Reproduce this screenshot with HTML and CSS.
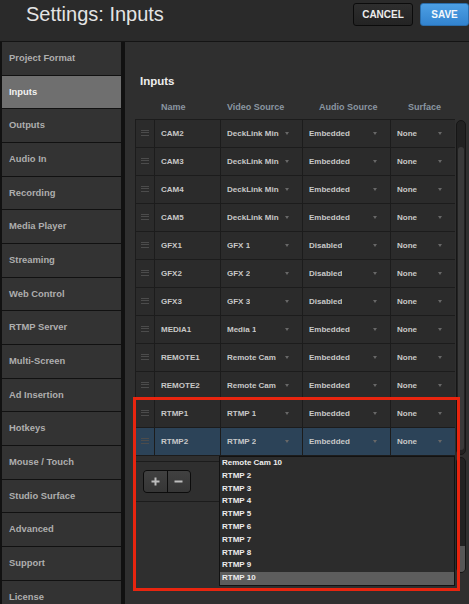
FILE: index.html
```html
<!DOCTYPE html>
<html>
<head>
<meta charset="utf-8">
<link rel="stylesheet" href="styles.css">
</head>
<body>
<div class="app">
  <header class="topbar">
    <h1 class="title">Settings: Inputs</h1>
    <div class="actions">
      <button class="btn btn-cancel">CANCEL</button>
      <button class="btn btn-save">SAVE</button>
    </div>
  </header>
  <div class="main">
    <nav class="sidebar">
      <div class="nav-item">Project Format</div>
      <div class="nav-item active">Inputs</div>
      <div class="nav-item">Outputs</div>
      <div class="nav-item">Audio In</div>
      <div class="nav-item">Recording</div>
      <div class="nav-item">Media Player</div>
      <div class="nav-item">Streaming</div>
      <div class="nav-item">Web Control</div>
      <div class="nav-item">RTMP Server</div>
      <div class="nav-item">Multi-Screen</div>
      <div class="nav-item">Ad Insertion</div>
      <div class="nav-item">Hotkeys</div>
      <div class="nav-item">Mouse / Touch</div>
      <div class="nav-item">Studio Surface</div>
      <div class="nav-item">Advanced</div>
      <div class="nav-item">Support</div>
      <div class="nav-item">License</div>
    </nav>
    <section class="content">
      <h2 class="section-title">Inputs</h2>
      <div class="table-wrap">
        <div class="table">
          <div class="thead">
            <div class="th"></div>
            <div class="th th-name">Name</div>
            <div class="th th-video">Video Source</div>
            <div class="th th-audio">Audio Source</div>
            <div class="th th-surface">Surface</div>
          </div>
          <div class="rows">
            <div class="row"><div class="cell handle"><span class="grip"></span></div><div class="cell name">CAM2</div><div class="cell sel"><span class="val">DeckLink Min</span><span class="caret"></span></div><div class="cell sel"><span class="val">Embedded</span><span class="caret"></span></div><div class="cell sel"><span class="val">None</span><span class="caret"></span></div></div>
            <div class="row"><div class="cell handle"><span class="grip"></span></div><div class="cell name">CAM3</div><div class="cell sel"><span class="val">DeckLink Min</span><span class="caret"></span></div><div class="cell sel"><span class="val">Embedded</span><span class="caret"></span></div><div class="cell sel"><span class="val">None</span><span class="caret"></span></div></div>
            <div class="row"><div class="cell handle"><span class="grip"></span></div><div class="cell name">CAM4</div><div class="cell sel"><span class="val">DeckLink Min</span><span class="caret"></span></div><div class="cell sel"><span class="val">Embedded</span><span class="caret"></span></div><div class="cell sel"><span class="val">None</span><span class="caret"></span></div></div>
            <div class="row"><div class="cell handle"><span class="grip"></span></div><div class="cell name">CAM5</div><div class="cell sel"><span class="val">DeckLink Min</span><span class="caret"></span></div><div class="cell sel"><span class="val">Embedded</span><span class="caret"></span></div><div class="cell sel"><span class="val">None</span><span class="caret"></span></div></div>
            <div class="row"><div class="cell handle"><span class="grip"></span></div><div class="cell name">GFX1</div><div class="cell sel"><span class="val">GFX 1</span><span class="caret"></span></div><div class="cell sel"><span class="val">Disabled</span><span class="caret"></span></div><div class="cell sel"><span class="val">None</span><span class="caret"></span></div></div>
            <div class="row"><div class="cell handle"><span class="grip"></span></div><div class="cell name">GFX2</div><div class="cell sel"><span class="val">GFX 2</span><span class="caret"></span></div><div class="cell sel"><span class="val">Disabled</span><span class="caret"></span></div><div class="cell sel"><span class="val">None</span><span class="caret"></span></div></div>
            <div class="row"><div class="cell handle"><span class="grip"></span></div><div class="cell name">GFX3</div><div class="cell sel"><span class="val">GFX 3</span><span class="caret"></span></div><div class="cell sel"><span class="val">Disabled</span><span class="caret"></span></div><div class="cell sel"><span class="val">None</span><span class="caret"></span></div></div>
            <div class="row"><div class="cell handle"><span class="grip"></span></div><div class="cell name">MEDIA1</div><div class="cell sel"><span class="val">Media 1</span><span class="caret"></span></div><div class="cell sel"><span class="val">Embedded</span><span class="caret"></span></div><div class="cell sel"><span class="val">None</span><span class="caret"></span></div></div>
            <div class="row"><div class="cell handle"><span class="grip"></span></div><div class="cell name">REMOTE1</div><div class="cell sel"><span class="val">Remote Cam</span><span class="caret"></span></div><div class="cell sel"><span class="val">Embedded</span><span class="caret"></span></div><div class="cell sel"><span class="val">None</span><span class="caret"></span></div></div>
            <div class="row"><div class="cell handle"><span class="grip"></span></div><div class="cell name">REMOTE2</div><div class="cell sel"><span class="val">Remote Cam</span><span class="caret"></span></div><div class="cell sel"><span class="val">Embedded</span><span class="caret"></span></div><div class="cell sel"><span class="val">None</span><span class="caret"></span></div></div>
            <div class="row"><div class="cell handle"><span class="grip"></span></div><div class="cell name">RTMP1</div><div class="cell sel"><span class="val">RTMP 1</span><span class="caret"></span></div><div class="cell sel"><span class="val">Embedded</span><span class="caret"></span></div><div class="cell sel"><span class="val">None</span><span class="caret"></span></div></div>
            <div class="row selected"><div class="cell handle"><span class="grip"></span></div><div class="cell name">RTMP2</div><div class="cell sel has-menu"><span class="val">RTMP 2</span><span class="caret"></span>
                <ul class="menu">
                  <li>Remote Cam 10</li>
                  <li>RTMP 2</li>
                  <li>RTMP 3</li>
                  <li>RTMP 4</li>
                  <li>RTMP 5</li>
                  <li>RTMP 6</li>
                  <li>RTMP 7</li>
                  <li>RTMP 8</li>
                  <li>RTMP 9</li>
                  <li class="hover">RTMP 10</li>
                </ul>
              </div><div class="cell sel"><span class="val">Embedded</span><span class="caret"></span></div><div class="cell sel"><span class="val">None</span><span class="caret"></span></div></div>
          </div>
          <div class="footer">
            <div class="btn-group">
              <button class="icon-btn"><svg width="9" height="9" viewBox="0 0 9 9"><path d="M4.5 0.5V8.5M0.5 4.5H8.5" stroke="#bdbdbd" stroke-width="2"/></svg></button>
              <button class="icon-btn"><svg width="9" height="9" viewBox="0 0 9 9"><path d="M0.5 4.5H8.5" stroke="#bdbdbd" stroke-width="2"/></svg></button>
            </div>
          </div>
        </div>
        <div class="scroll-col">
          <div class="track track-main"><div class="thumb"></div></div>
          <div class="track track-low"><div class="thumb thumb-low"></div></div>
        </div>
      </div>
    </section>
  </div>
  <div class="highlight"></div>
</div>
</body>
</html>
```

FILE: styles.css
```css
* { box-sizing: border-box; }
html, body { margin: 0; padding: 0; }
body {
  width: 469px;
  height: 604px;
  overflow: hidden;
  background: #2f2f2f;
  font-family: "Liberation Sans", Arial, sans-serif;
}
.app {
  position: relative;
  width: 469px;
  height: 604px;
  overflow: hidden;
}
.topbar {
  height: 42px;
  background: #2a2a2a;
  border-bottom: 1px solid #141414;
  display: flex;
  align-items: flex-start;
}
.title {
  margin: 0 0 0 26px;
  padding-top: 4px;
  font-size: 20px;
  line-height: 20px;
  font-weight: normal;
  color: #e4e4e4;
}
.actions {
  margin-left: auto;
  padding-top: 3px;
  display: flex;
  gap: 7px;
}
.btn {
  height: 23px;
  border-radius: 3px;
  font-family: "Liberation Sans", Arial, sans-serif;
  font-weight: bold;
  font-size: 10px;
  color: #ececec;
  padding: 0;
  cursor: pointer;
}
.btn-cancel {
  width: 60px;
  background: linear-gradient(#2e2e2e, #232323);
  border: 1px solid #0b0b0b;
}
.btn-save {
  width: 49px;
  background: linear-gradient(#4c9fe4, #3283cf);
  border: 1px solid #2a6dab;
  color: #f4f8fc;
}
.main {
  display: flex;
  height: 562px;
}
.sidebar {
  width: 125px;
  flex: none;
  background: #111111;
  padding: 0 4px 0 2px;
  display: flex;
  flex-direction: column;
  gap: 1px;
}
.nav-item {
  height: 32.67px;
  flex: none;
  background: #333333;
  color: #aeaeae;
  font-weight: bold;
  font-size: 9.4px;
  line-height: 32.67px;
  padding-left: 7px;
  white-space: nowrap;
}
.nav-item.active {
  background: #6f6f6f;
  color: #f2f2f2;
}
.content {
  flex: 1;
  background: #2f2f2f;
  padding: 32px 0 0 10px;
}
.section-title {
  margin: 0 0 0 5px;
  font-size: 11.5px;
  line-height: 14px;
  font-weight: bold;
  color: #ededed;
}
.table-wrap {
  margin-top: 7px;
  display: flex;
  align-items: flex-start;
}
.table {
  width: 320px;
  flex: none;
}
.thead {
  height: 24px;
  display: grid;
  grid-template-columns: 19px 66px 82px 88px 65px;
  align-items: center;
}
.th {
  font-size: 9px;
  font-weight: bold;
  color: #8a96a1;
  white-space: nowrap;
}
.th-name { padding-left: 7px; }
.th-video { padding-left: 7px; }
.th-audio { padding-left: 17px; }
.th-surface { padding-left: 18px; }
.rows {
  background: #1c1c1c;
  padding: 1px 0 1px 1px;
  display: flex;
  flex-direction: column;
  gap: 1px;
}
.row {
  height: 27px;
  display: grid;
  grid-template-columns: 18px 65px 81px 87px 64px;
  gap: 1px;
}
.cell {
  background: #2b2b2b;
  display: flex;
  align-items: center;
  font-size: 8px;
  font-weight: bold;
  color: #c8c8c8;
  white-space: nowrap;
  min-width: 0;
}
.row.selected .cell { background: #2c4358; }
.handle { justify-content: center; }
.grip {
  width: 8px;
  height: 6px;
  border-top: 1px solid #4c4c4c;
  border-bottom: 1px solid #4c4c4c;
  position: relative;
  margin-top: -2px;
}
.grip::after {
  content: "";
  position: absolute;
  left: 0;
  right: 0;
  top: 1.5px;
  height: 1px;
  background: #4c4c4c;
}
.name { padding-left: 6px; }
.sel {
  padding: 0 13px 0 6px;
  justify-content: space-between;
  position: relative;
}
.val { overflow: hidden; }
.caret {
  flex: none;
  width: 0;
  height: 0;
  border-left: 2.5px solid transparent;
  border-right: 2.5px solid transparent;
  border-top: 3px solid #686868;
  margin-left: 4px;
}
.menu {
  position: absolute;
  z-index: 5;
  top: calc(100% + 1px);
  left: -2px;
  width: 236px;
  margin: 0;
  padding: 0;
  list-style: none;
  background: #2c2c2c;
  border: 1px solid #121212;
}
.menu li {
  height: 12.8px;
  line-height: 12.8px;
  padding-left: 2px;
  font-size: 8px;
  font-weight: bold;
  color: #ececec;
}
.menu li.hover { background: #5d5d5d; }
.footer {
  margin-top: 5px;
  height: 41px;
  border-top: 1px solid #1c1c1c;
  border-bottom: 1px solid #1c1c1c;
  border-left: 1px solid #1c1c1c;
  padding: 8px 0 0 7px;
}
.btn-group {
  display: flex;
  width: 48px;
  height: 23px;
  border: 1px solid #0c0c0c;
  border-radius: 4px;
  overflow: hidden;
  background: #0c0c0c;
  gap: 1px;
}
.icon-btn {
  flex: 1;
  border: 0;
  padding: 0;
  background: linear-gradient(#404040, #363636);
  display: flex;
  align-items: center;
  justify-content: center;
}
.scroll-col {
  width: 10px;
  margin-left: 1px;
  flex: none;
}
.track {
  border: 1px solid #161616;
  border-radius: 5px;
  background: #222222;
  position: relative;
  overflow: hidden;
}
.track-main {
  margin-top: 25px;
  height: 335px;
}
.track-main .thumb {
  position: absolute;
  left: 1px;
  right: 1px;
  top: 26px;
  bottom: 4px;
  border-radius: 4px;
  background: #3a3a3a;
}
.track-low {
  margin-top: 2px;
  height: 116px;
}
.thumb-low {
  position: absolute;
  left: 0;
  right: 0;
  bottom: 0;
  height: 26px;
  background: #575757;
}
.highlight {
  position: absolute;
  z-index: 10;
  left: 133px;
  top: 397px;
  width: 327px;
  height: 194px;
  border: 3px solid #e8250f;
  pointer-events: none;
}
```
